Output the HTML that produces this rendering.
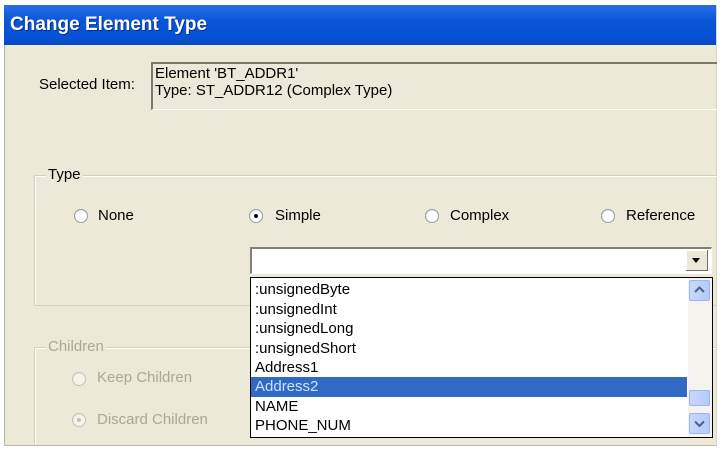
<!DOCTYPE html>
<html><head><style>
*{margin:0;padding:0;box-sizing:border-box}
html,body{width:720px;height:449px;overflow:hidden}
body{background:#fff;position:relative;font-family:"Liberation Sans",sans-serif;font-size:15px;color:#000}
.a{position:absolute}
#win{left:4px;top:5px;width:713px;height:441px;background:#ECE9D8;border-left:1px solid #b8b6a8;border-bottom:1px solid #b8b6a8;border-right:1px solid #d8d6c8;overflow:hidden}
#title{left:4px;top:5px;width:712px;height:40px;background:linear-gradient(#2a6ee8,#0a56d8 40%,#0552d6 80%,#0a48c0);color:#fff;font-weight:bold;font-size:19px;padding:9px 0 0 6px;text-shadow:1px 1px 0 #0a2a80}
.grp{border:1px solid #d0d0bf;border-right:none;box-shadow:inset 1px 1px 0 #fff}
.lbl{background:#ECE9D8;padding:0 2px}
.radio{width:14px;height:14px;border-radius:50%;background:radial-gradient(circle at 60% 60%,#fff 50%,#ddd 100%);border:1px solid #9a9a9a}
.dot{position:absolute;left:4px;top:4px;width:4px;height:4px;border-radius:50%;background:#000}
.row{position:absolute;left:4px;height:19.5px;line-height:19px;white-space:nowrap}
.sb{background:linear-gradient(90deg,#c8d8fc,#b4cafc);border:1px solid #9cb4f0;border-radius:2px}
</style></head><body>
<div id="win" class="a">
<div class="a grp" style="left:29px;top:342px;width:683px;height:98px;border-bottom:none"></div>
</div>
<div id="title" class="a">Change Element Type</div>
<div class="a" style="left:39px;top:76px">Selected Item:</div>
<div class="a" style="left:151px;top:62px;width:566px;height:48px;border-top:2px solid #7c7a70;border-left:2px solid #7c7a70;border-bottom:1px solid #fff;line-height:17px;padding:1px 0 0 2px">Element 'BT_ADDR1'<br>Type: ST_ADDR12 (Complex Type)</div>

<div class="a grp" style="left:34px;top:175px;width:683px;height:131px"></div>
<div class="a lbl" style="left:46px;top:166px">Type</div>
<div class="a radio" style="left:74px;top:209px"></div><div class="a" style="left:98px;top:207px">None</div>
<div class="a radio" style="left:249px;top:209px"><div class="dot"></div></div><div class="a" style="left:275px;top:207px">Simple</div>
<div class="a radio" style="left:425px;top:209px"></div><div class="a" style="left:450px;top:207px">Complex</div>
<div class="a radio" style="left:601px;top:209px"></div><div class="a" style="left:626px;top:207px">Reference</div>

<div class="a lbl" style="left:46px;top:338px;color:#aca899">Children</div>
<div class="a radio" style="left:72px;top:372px;opacity:.5"></div><div class="a" style="left:97px;top:369px;color:#aca899">Keep Children</div>
<div class="a radio" style="left:72px;top:413px;opacity:.5"><div class="dot" style="background:#999"></div></div><div class="a" style="left:97px;top:411px;color:#aca899">Discard Children</div>

<div class="a" style="left:250px;top:247px;width:462px;height:27px;background:#fff;border-top:2px solid #848078;border-left:2px solid #848078;border-right:1px solid #fff;border-bottom:1px solid #fff"></div>
<div class="a" style="left:686px;top:250px;width:22px;height:21px;background:#ECE9D8;border-right:1px solid #716f64;border-bottom:1px solid #716f64;box-shadow:inset 1px 1px 0 #fff"><div style="position:absolute;left:6px;top:8px;border-left:4px solid transparent;border-right:4px solid transparent;border-top:5px solid #000"></div></div>

<div class="a" style="left:250px;top:277px;width:463px;height:161px;background:#fff;border:1px solid #000">
<div class="row" style="top:2px">:unsignedByte</div>
<div class="row" style="top:21.5px">:unsignedInt</div>
<div class="row" style="top:41px">:unsignedLong</div>
<div class="row" style="top:60.5px">:unsignedShort</div>
<div class="row" style="top:80px">Address1</div>
<div class="row" style="top:99px;left:0;width:436px;padding-left:4px;background:#316AC5;color:#cfe0ff">Address2</div>
<div class="row" style="top:119px">NAME</div>
<div class="row" style="top:138px">PHONE_NUM</div>
<div class="a" style="left:437px;top:0;width:24px;height:159px;background:#f4f3ee"></div>
<div class="a sb" style="left:438px;top:2px;width:21px;height:21px"><svg width="19" height="19" style="position:absolute;left:0;top:0"><path d="M5 11 L9.5 6.5 L14 11" stroke="#4d6185" stroke-width="2" fill="none"/></svg></div>
<div class="a sb" style="left:438px;top:112px;width:21px;height:16px"></div>
<div class="a sb" style="left:438px;top:135px;width:21px;height:21px"><svg width="19" height="19" style="position:absolute;left:0;top:0"><path d="M5 7.5 L9.5 12 L14 7.5" stroke="#4d6185" stroke-width="2" fill="none"/></svg></div>
</div>
</body></html>
